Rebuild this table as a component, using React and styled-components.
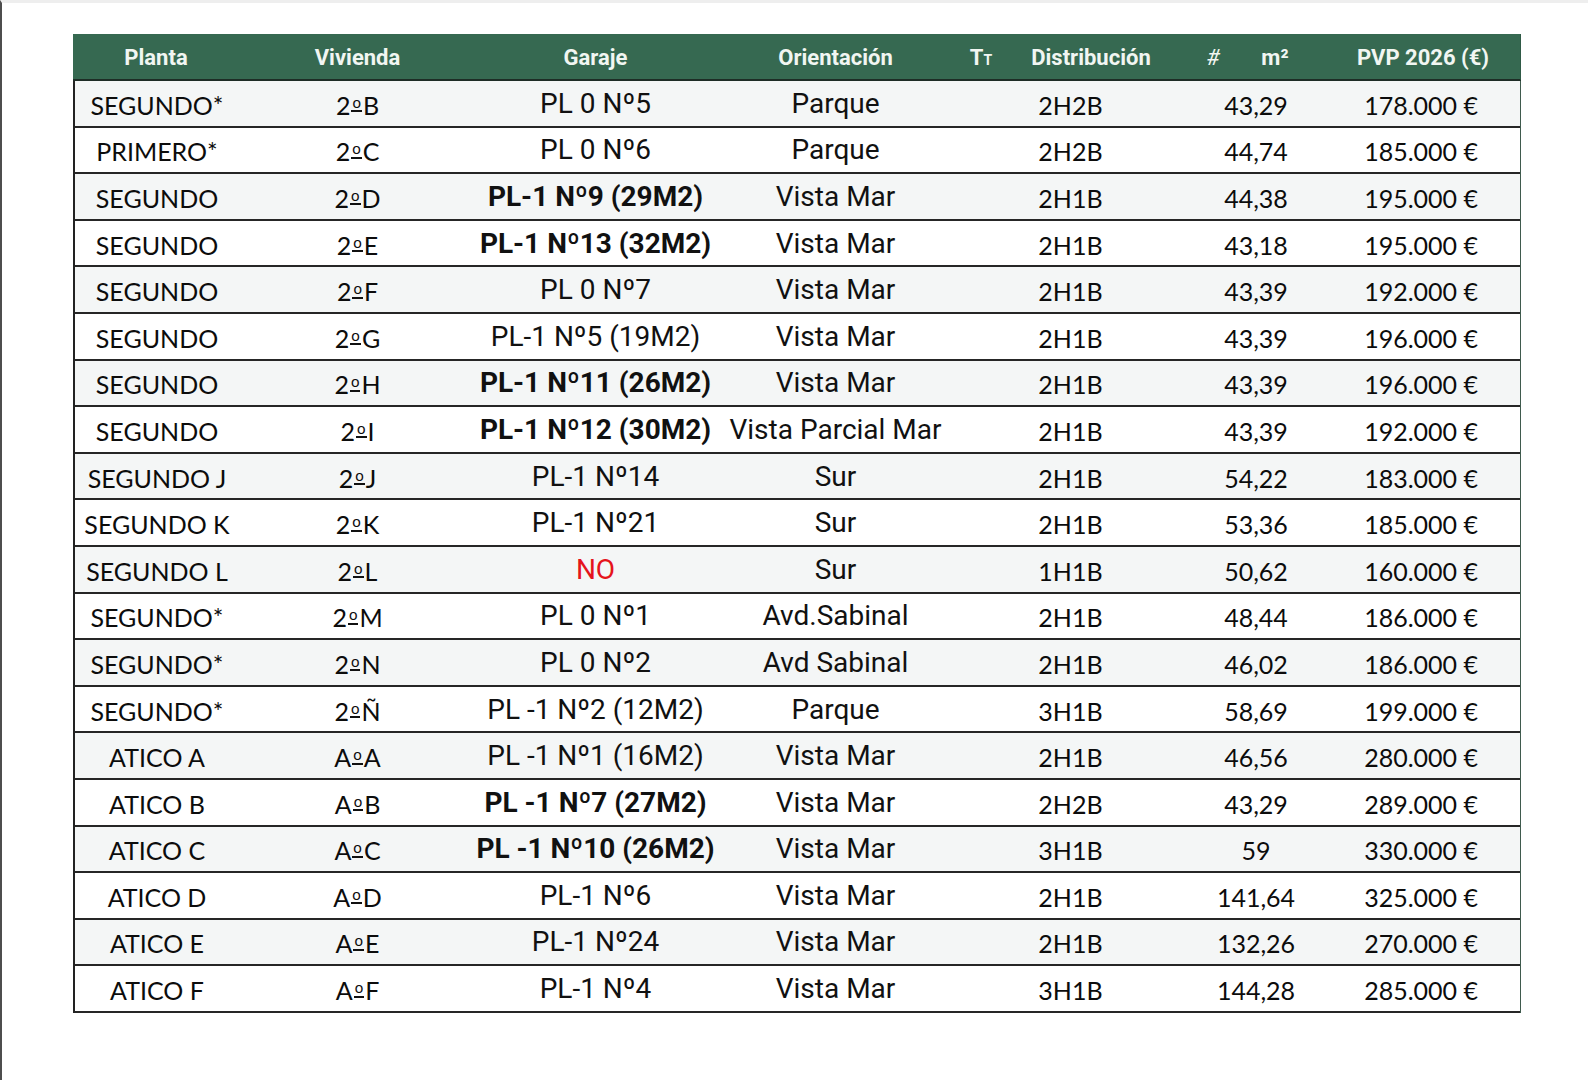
import React from 'react';
import styled, { createGlobalStyle } from 'styled-components';

const GlobalStyle = createGlobalStyle`
  html, body {
    margin: 0;
    padding: 0;
    background: #ffffff;
  }
`;

const Page = styled.div`
  min-height: 100vh;
  box-sizing: border-box;
  border-left: 2px solid #4d4d4d;
  border-top: 3px solid #eeeeee;
  padding: 31px 0 0 71px;
`;

const Table = styled.div`
  width: 1448px;
`;

const HeaderRow = styled.div`
  display: grid;
  grid-template-columns: 166px 237px 239px 241px 50px 170px 74px 50px 1fr;
  align-items: center;
  height: 47px;
  box-sizing: border-box;
  background: #366951;
  border-bottom: 2px solid #1e2d26;
  border-right: 1px solid #2f5a46;
`;

const HeadCell = styled.div`
  font-family: Roboto, "Liberation Sans", sans-serif;
  font-weight: 700;
  font-size: 22px;
  color: #f1f6f2;
  text-align: center;
  padding-left: ${p => p.$pl || 0}px;
  padding-top: 2px;
`;

const SmallT = styled.span`
  font-size: 14px;
`;

const Hash = styled.span`
  font-weight: 400;
  font-style: italic;
`;

const Body = styled.div`
  border-left: 2px solid #222222;
  border-right: 1px solid #3f5a4d;
`;

const Row = styled.div`
  display: grid;
  grid-template-columns: 164px 237px 239px 241px 229px 142px 1fr;
  align-items: center;
  height: 46.6px;
  box-sizing: border-box;
  border-bottom: 2px solid #262626;
  background: ${p => (p.$alt ? '#f4f6f6' : '#ffffff')};
`;

const Cell = styled.div`
  font-family: Lato, "Open Sans", sans-serif;
  font-size: 25px;
  color: #0c0c0c;
  text-align: ${p => p.$align || 'center'};
  padding-right: ${p => p.$pr || 0}px;
  padding-top: 3px;
  white-space: nowrap;
`;

const Ordinal = styled.span`
  display: inline-block;
  font-size: 15px;
  line-height: 0.9;
  vertical-align: 7px;
  border-bottom: 2px solid #111111;
  padding: 0 1px 1px;
  margin: 0 1px;
`;

const RobotoCell = styled.div`
  font-family: Roboto, "Liberation Sans", sans-serif;
  font-size: 28px;
  font-weight: ${p => (p.$bold ? 700 : 400)};
  color: ${p => (p.$red ? '#e5141c' : '#111111')};
  text-align: center;
  white-space: nowrap;
`;

const rows = [
  ['SEGUNDO*', '2ºB', 'PL 0 Nº5', false, 'Parque', '2H2B', '43,29', '178.000 €'],
  ['PRIMERO*', '2ºC', 'PL 0 Nº6', false, 'Parque', '2H2B', '44,74', '185.000 €'],
  ['SEGUNDO', '2ºD', 'PL-1 Nº9 (29M2)', true, 'Vista Mar', '2H1B', '44,38', '195.000 €'],
  ['SEGUNDO', '2ºE', 'PL-1 Nº13 (32M2)', true, 'Vista Mar', '2H1B', '43,18', '195.000 €'],
  ['SEGUNDO', '2ºF', 'PL 0 Nº7', false, 'Vista Mar', '2H1B', '43,39', '192.000 €'],
  ['SEGUNDO', '2ºG', 'PL-1 Nº5 (19M2)', false, 'Vista Mar', '2H1B', '43,39', '196.000 €'],
  ['SEGUNDO', '2ºH', 'PL-1 Nº11 (26M2)', true, 'Vista Mar', '2H1B', '43,39', '196.000 €'],
  ['SEGUNDO', '2ºI', 'PL-1 Nº12 (30M2)', true, 'Vista Parcial Mar', '2H1B', '43,39', '192.000 €'],
  ['SEGUNDO J', '2ºJ', 'PL-1 Nº14', false, 'Sur', '2H1B', '54,22', '183.000 €'],
  ['SEGUNDO K', '2ºK', 'PL-1 Nº21', false, 'Sur', '2H1B', '53,36', '185.000 €'],
  ['SEGUNDO L', '2ºL', 'NO', false, 'Sur', '1H1B', '50,62', '160.000 €'],
  ['SEGUNDO*', '2ºM', 'PL 0 Nº1', false, 'Avd.Sabinal', '2H1B', '48,44', '186.000 €'],
  ['SEGUNDO*', '2ºN', 'PL 0 Nº2', false, 'Avd Sabinal', '2H1B', '46,02', '186.000 €'],
  ['SEGUNDO*', '2ºÑ', 'PL -1 Nº2 (12M2)', false, 'Parque', '3H1B', '58,69', '199.000 €'],
  ['ATICO A', 'AºA', 'PL -1 Nº1 (16M2)', false, 'Vista Mar', '2H1B', '46,56', '280.000 €'],
  ['ATICO B', 'AºB', 'PL -1 Nº7 (27M2)', true, 'Vista Mar', '2H2B', '43,29', '289.000 €'],
  ['ATICO C', 'AºC', 'PL -1 Nº10 (26M2)', true, 'Vista Mar', '3H1B', '59', '330.000 €'],
  ['ATICO D', 'AºD', 'PL-1 Nº6', false, 'Vista Mar', '2H1B', '141,64', '325.000 €'],
  ['ATICO E', 'AºE', 'PL-1 Nº24', false, 'Vista Mar', '2H1B', '132,26', '270.000 €'],
  ['ATICO F', 'AºF', 'PL-1 Nº4', false, 'Vista Mar', '3H1B', '144,28', '285.000 €'],
];

const Vivienda = ({ code }) => {
  const [before, after] = code.split('º');
  return (
    <Cell>
      {before}
      <Ordinal>o</Ordinal>
      {after}
    </Cell>
  );
};

export default function App() {
  return (
    <>
      <GlobalStyle />
      <Page>
        <Table>
          <HeaderRow>
            <HeadCell>Planta</HeadCell>
            <HeadCell>Vivienda</HeadCell>
            <HeadCell>Garaje</HeadCell>
            <HeadCell>Orientación</HeadCell>
            <HeadCell>T<SmallT>T</SmallT></HeadCell>
            <HeadCell>Distribución</HeadCell>
            <HeadCell><Hash>#</Hash></HeadCell>
            <HeadCell>m²</HeadCell>
            <HeadCell $pl={26}>PVP 2026 (€)</HeadCell>
          </HeaderRow>
          <Body>
            {rows.map(([planta, viv, garaje, bold, orient, dist, m2, pvp], i) => (
              <Row key={viv} $alt={i % 2 === 0}>
                <Cell>{planta}</Cell>
                <Vivienda code={viv} />
                <RobotoCell $bold={bold} $red={garaje === 'NO'}>{garaje}</RobotoCell>
                <RobotoCell>{orient}</RobotoCell>
                <Cell>{dist}</Cell>
                <Cell>{m2}</Cell>
                <Cell $align="right" $pr={42}>{pvp}</Cell>
              </Row>
            ))}
          </Body>
        </Table>
      </Page>
    </>
  );
}
